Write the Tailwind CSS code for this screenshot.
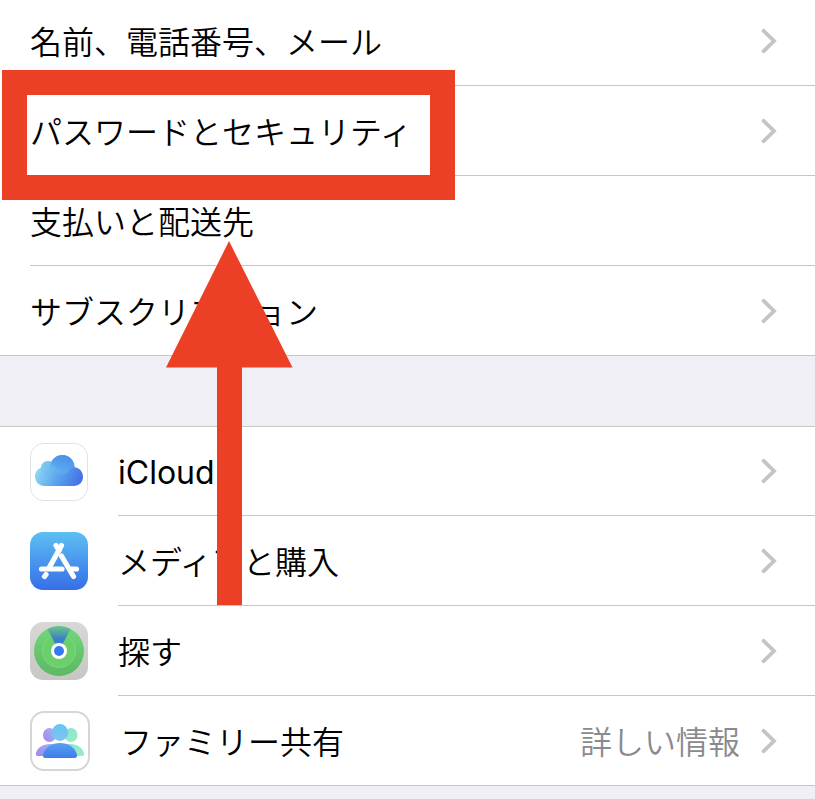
<!DOCTYPE html>
<html lang="ja">

<head>
    <meta charset="UTF-8">
    <meta name="viewport" content="width=device-width, initial-scale=1.0">
    <script src="https://cdn.jsdelivr.net/npm/@tailwindcss/browser@4"></script>
    <title>Apple ID</title>
</head>

<body class="relative min-h-screen overflow-x-hidden bg-[#f0eff5] font-['Inter','Noto_Sans_CJK_JP',sans-serif] text-[32px] leading-10 font-[350] text-black">

    <!-- chevron shared by the rows -->
    <svg class="hidden">
        <symbol id="chevron" viewBox="0 0 16 26">
            <path d="M2.6 2.8 13 13 2.6 23.2" fill="none" stroke="#c4c4c6" stroke-width="3.8" stroke-linecap="round" stroke-linejoin="miter" />
        </symbol>
    </svg>

    <main>
        <!-- account -->
        <ul class="-mt-1 border-b border-[#c6c6c8] bg-white pl-[30px]">
            <li class="border-b border-[#c6c6c8]">
                <a href="#" class="flex h-[89px] items-center justify-between pr-[38px]">
                    <span class="pt-1">名前、電話番号、メール</span>
                    <svg class="h-[26px] w-4"><use href="#chevron" /></svg>
                </a>
            </li>
            <li class="border-b border-[#c6c6c8]">
                <a href="#" class="flex h-[89px] items-center justify-between pr-[38px]">
                    <span class="pt-1">パスワードとセキュリティ</span>
                    <svg class="h-[26px] w-4"><use href="#chevron" /></svg>
                </a>
            </li>
            <li class="border-b border-[#c6c6c8]">
                <a href="#" class="flex h-[89px] items-center pr-[38px]">
                    <span class="pt-1">支払いと配送先</span>
                </a>
            </li>
            <li>
                <a href="#" class="flex h-[89px] items-center justify-between pr-[38px]">
                    <span class="pt-1">サブスクリプション</span>
                    <svg class="h-[26px] w-4"><use href="#chevron" /></svg>
                </a>
            </li>
        </ul>

        <!-- services -->
        <ul class="mt-[70px] border-y border-[#c6c6c8] bg-white pl-[30px]">
            <li>
                <a href="#" class="flex items-center gap-[30px]">
                    <svg class="size-[58px] shrink-0" viewBox="0 0 58 58">
                        <defs>
                            <linearGradient id="cloud" x1="0" y1="0.4" x2="1" y2="0.7">
                                <stop offset="0" stop-color="#9adcf3" />
                                <stop offset="0.5" stop-color="#5ba6ee" />
                                <stop offset="1" stop-color="#456fe8" />
                            </linearGradient>
                            <linearGradient id="cloudTop" x1="0.7" y1="0" x2="0.3" y2="1">
                                <stop offset="0" stop-color="#4a8eea" />
                                <stop offset="0.6" stop-color="#57a4ee" />
                                <stop offset="1" stop-color="#6fbcf1" stop-opacity="0" />
                            </linearGradient>
                        </defs>
                        <rect x="0.5" y="0.5" width="57" height="57" rx="13" fill="#fff" stroke="#e2e2e4" />
                        <path d="M14.5 43C9 43 5 38.700 5 33.500c0-4.200 2.400-7.500 6-9C11.200 20.500 14.300 18 18 18c1.300 0 2.500.3 3.500.8C23.300 14.800 27.500 12 32.500 12c6.500 0 11.700 5 12 12.300C49.500 24.700 53 28.800 53 33.700 53 39 49 43 43.500 43z" fill="url(#cloud)" />
                        <path d="M21.500 18.800C23.300 14.800 27.500 12 32.500 12c6.500 0 11.700 5 12 12.300-2.500.2-5 1.700-6.500 4.200C34 34 24 34 21 28c-1.200-3-1-6.500.5-9.200z" fill="url(#cloudTop)" />
                        <circle cx="18" cy="25" r="7" fill="#5fbdec" fill-opacity="0.3" />
                    </svg>
                    <div class="flex h-[89px] flex-1 items-center justify-between border-b border-[#c6c6c8] pr-[38px]">
                        <span class="pt-1 font-normal">iCloud</span>
                        <svg class="h-[26px] w-4"><use href="#chevron" /></svg>
                    </div>
                </a>
            </li>
            <li>
                <a href="#" class="flex items-center gap-[30px]">
                    <svg class="size-[58px] shrink-0" viewBox="0 0 58 58">
                        <defs>
                            <linearGradient id="store" x1="0" y1="0" x2="0" y2="1">
                                <stop offset="0" stop-color="#5cc0f3" />
                                <stop offset="1" stop-color="#366ee7" />
                            </linearGradient>
                        </defs>
                        <rect width="58" height="58" rx="13" fill="url(#store)" />
                        <g stroke="#fff" stroke-width="5.200" stroke-linecap="round" fill="none">
                            <path d="M31.500 13.500 19 36" />
                            <path d="M26 13.500 29 18.500" />
                            <path d="M31.500 24 43.500 44.500" />
                            <path d="M11.500 37H32" />
                            <path d="M41.500 37H46.500" />
                            <path d="M16 42.500 14.500 44.500" />
                        </g>
                    </svg>
                    <div class="flex h-[90px] flex-1 items-center justify-between border-b border-[#c6c6c8] pr-[38px]">
                        <span class="pt-1">メディアと購入</span>
                        <svg class="h-[26px] w-4"><use href="#chevron" /></svg>
                    </div>
                </a>
            </li>
            <li>
                <a href="#" class="flex items-center gap-[30px]">
                    <svg class="size-[58px] shrink-0" viewBox="0 0 58 58">
                        <defs>
                            <linearGradient id="findBg" x1="0" y1="0" x2="0" y2="1">
                                <stop offset="0" stop-color="#d8d8d8" />
                                <stop offset="1" stop-color="#c6c6c4" />
                            </linearGradient>
                            <linearGradient id="radar" x1="0" y1="0" x2="0" y2="1">
                                <stop offset="0" stop-color="#70d878" />
                                <stop offset="1" stop-color="#5cb864" />
                            </linearGradient>
                            <linearGradient id="beam" x1="0" y1="0" x2="0" y2="1">
                                <stop offset="0" stop-color="#4a90b8" stop-opacity="0.25" />
                                <stop offset="0.5" stop-color="#3a80c8" />
                                <stop offset="1" stop-color="#3678e8" />
                            </linearGradient>
                        </defs>
                        <rect width="58" height="58" rx="13" fill="url(#findBg)" />
                        <circle cx="29" cy="29" r="25" fill="url(#radar)" />
                        <circle cx="29" cy="29" r="16.500" fill="#6bcf6b" stroke="#7cd87c" />
                        <path d="M29 29 17.500 7A25 25 0 0 1 40.500 7z" fill="url(#beam)" />
                        <circle cx="29" cy="29" r="8" fill="#fff" />
                        <circle cx="29" cy="29" r="5" fill="#3678f0" />
                    </svg>
                    <div class="flex h-[90px] flex-1 items-center justify-between border-b border-[#c6c6c8] pr-[38px]">
                        <span class="pt-1">探す</span>
                        <svg class="h-[26px] w-4"><use href="#chevron" /></svg>
                    </div>
                </a>
            </li>
            <li>
                <a href="#" class="flex items-center gap-[30px]">
                    <svg class="size-[60px] shrink-0" viewBox="0 0 60 60">
                        <defs>
                            <linearGradient id="left" x1="0" y1="1" x2="1" y2="0">
                                <stop offset="0" stop-color="#a184f0" />
                                <stop offset="1" stop-color="#a8b8f2" />
                            </linearGradient>
                            <linearGradient id="right" x1="0" y1="0" x2="1" y2="1">
                                <stop offset="0" stop-color="#8ae0d8" />
                                <stop offset="1" stop-color="#98efc0" />
                            </linearGradient>
                            <linearGradient id="head" x1="0" y1="0" x2="0" y2="1">
                                <stop offset="0" stop-color="#68c4f2" />
                                <stop offset="1" stop-color="#7cc4f2" />
                            </linearGradient>
                            <linearGradient id="center" x1="0" y1="0" x2="0" y2="1">
                                <stop offset="0" stop-color="#58a0f0" />
                                <stop offset="1" stop-color="#3e7cec" />
                            </linearGradient>
                        </defs>
                        <rect x="1" y="1" width="58" height="58" rx="13" fill="#fff" stroke="#d6d6d8" stroke-width="2" />
                        <ellipse cx="19.500" cy="24" rx="6.500" ry="7" fill="url(#left)" />
                        <ellipse cx="41" cy="24" rx="6.500" ry="7" fill="url(#right)" />
                        <path d="M8 45c-2 0-2.500-1.500-2-3C7.500 36.500 13 33 20 33c6 0 11 3 13 7v5z" fill="url(#left)" />
                        <path d="M52 45c2 0 2.500-1.500 2-3C52.500 36.500 47 33 40 33c-6 0-11 3-13 7v5z" fill="url(#right)" />
                        <ellipse cx="30" cy="21.500" rx="8" ry="8.500" fill="url(#head)" />
                        <path d="M15.500 47c-2.200 0-3-1.500-2.300-3.800C15 36.500 21.500 32 30 32s15 4.500 16.800 11.200C47.500 45.500 46.700 47 44.500 47z" fill="url(#center)" />
                    </svg>
                    <div class="flex h-[89px] flex-1 items-center gap-[21px] pr-[38px]">
                        <span class="flex-1 pt-1">ファミリー共有</span>
                        <span class="pt-1 text-[#8a8a8e]">詳しい情報</span>
                        <svg class="h-[26px] w-4"><use href="#chevron" /></svg>
                    </div>
                </a>
            </li>
        </ul>
    </main>

    <!-- red frame and arrow over the list -->
    <div class="absolute top-[70px] left-0.5 h-[130px] w-[453px] border-[25px] border-[#eb4026]"></div>
    <svg class="absolute top-[241px] left-[166px] h-[364px] w-[127px]" viewBox="0 0 127 364">
        <path d="M63 0 126.500 126.500H76V364H51V126.500H0z" fill="#eb4026" />
    </svg>
</body>

</html>
